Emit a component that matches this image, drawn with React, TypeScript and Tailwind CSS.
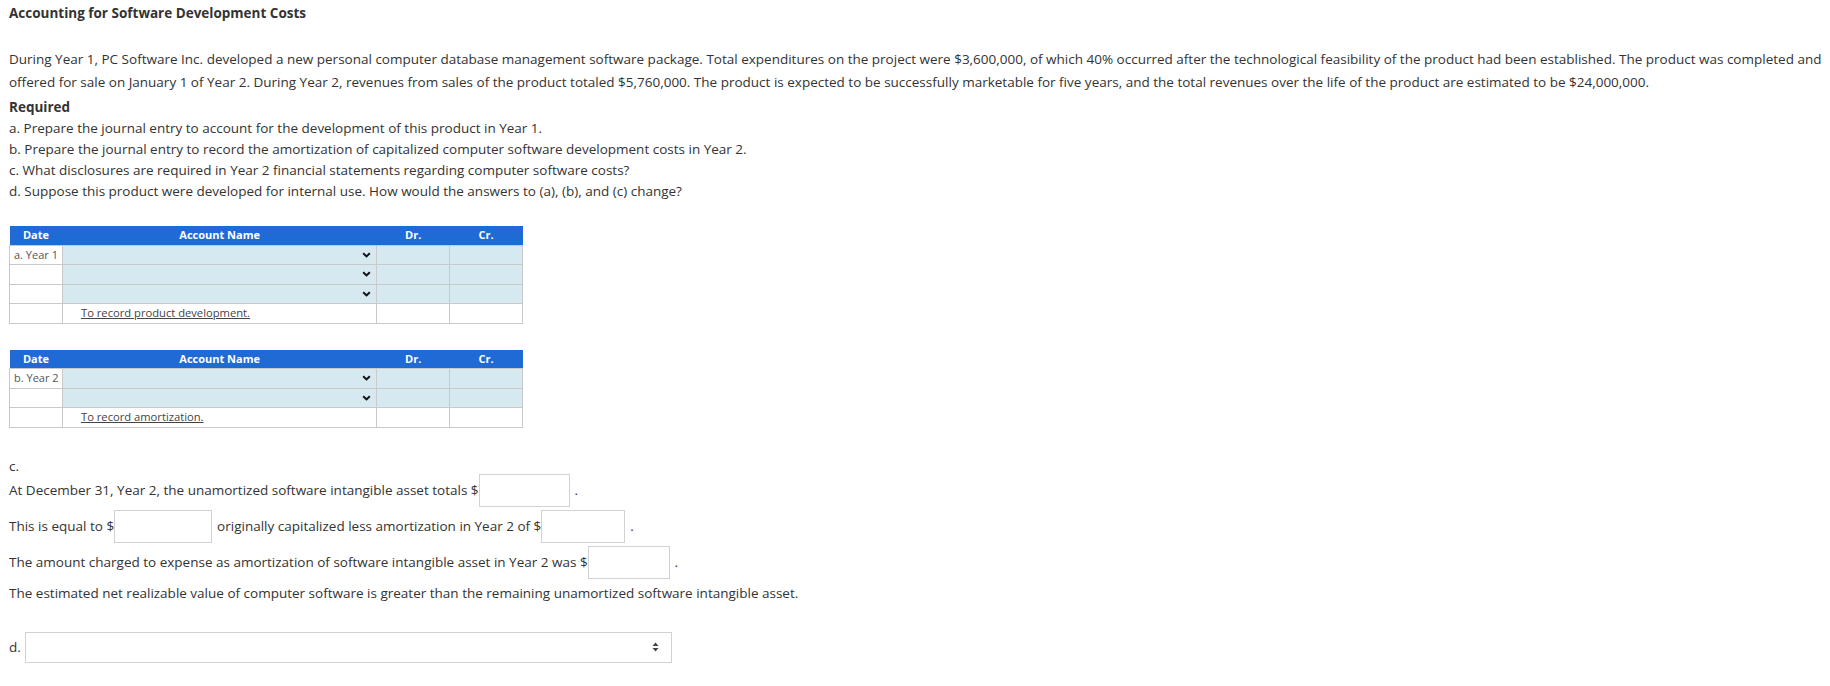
import React from "react";

const font = { fontFamily: '"Open Sans", Arial, sans-serif' };

function Chevron() {
  return (
    <svg width="9" height="6" viewBox="0 0 9 6" className="text-[#111]">
      <path d="M1.2 1.2 L4.5 4.4 L7.8 1.2" fill="none" stroke="currentColor" strokeWidth="2" />
    </svg>
  );
}

type Row = { date?: string; select: boolean; note?: string };

function Journal({ rows }: { rows: Row[] }) {
  return (
    <table className="border-collapse w-[514px] text-[11px] text-[#333]">
      <thead>
        <tr className="bg-[#1f6ad4] text-white font-bold h-[19px]">
          <th className="w-[53px] text-center font-bold">Date</th>
          <th className="w-[315px] text-center font-bold">Account Name</th>
          <th className="w-[73px] text-center font-bold">Dr.</th>
          <th className="w-[73px] text-center font-bold">Cr.</th>
        </tr>
      </thead>
      <tbody>
        {rows.map((r, i) => (
          <tr key={i} className="h-[19.5px]">
            <td className="border border-[#c9c9c9] pl-[4px] whitespace-nowrap text-[#555]">{r.date}</td>
            {r.select ? (
              <td className="border border-[#c9c9c9] bg-[#d6e9f0] pr-[5px]">
                <div className="flex justify-end items-center">
                  <Chevron />
                </div>
              </td>
            ) : (
              <td className="border border-[#c9c9c9] pl-[18px]">
                <span className="underline text-[#444] text-[11.2px]">{r.note}</span>
              </td>
            )}
            <td className={`border border-[#c9c9c9] ${r.select ? "bg-[#d6e9f0]" : ""}`}></td>
            <td className={`border border-[#c9c9c9] ${r.select ? "bg-[#d6e9f0]" : ""}`}></td>
          </tr>
        ))}
      </tbody>
    </table>
  );
}

function Box({ w }: { w: string }) {
  return <input type="text" className={`${w} h-[33px] border border-[#d2d2d2] bg-white outline-none`} />;
}

export default function App() {
  return (
    <div className="min-h-screen bg-white text-[#333] text-[13.5px] pl-[9px] pr-0 pt-[3px]" style={font}>
      <h1 className="font-bold text-[13.5px] leading-[20px] text-[#333]">Accounting for Software Development Costs</h1>

      <p className="mt-[25px] leading-[23px]">
        During Year 1, PC Software Inc. developed a new personal computer database management software package. Total expenditures on the project were $3,600,000, of which 40% occurred after the technological feasibility of the product had been established. The product was completed and offered for sale on January 1 of Year 2. During Year 2, revenues from sales of the product totaled $5,760,000. The product is expected to be successfully marketable for five years, and the total revenues over the life of the product are estimated to be $24,000,000.
      </p>

      <div className="mt-[3px] leading-[21px]">
        <div className="font-bold">Required</div>
        <div>a. Prepare the journal entry to account for the development of this product in Year 1.</div>
        <div>b. Prepare the journal entry to record the amortization of capitalized computer software development costs in Year 2.</div>
        <div>c. What disclosures are required in Year 2 financial statements regarding computer software costs?</div>
        <div>d. Suppose this product were developed for internal use. How would the answers to (a), (b), and (c) change?</div>
      </div>

      <div className="mt-[24px]">
        <Journal
          rows={[
            { date: "a. Year 1", select: true },
            { select: true },
            { select: true },
            { select: false, note: "To record product development." },
          ]}
        />
      </div>

      <div className="mt-[26px]">
        <Journal
          rows={[
            { date: "b. Year 2", select: true },
            { select: true },
            { select: false, note: "To record amortization." },
          ]}
        />
      </div>

      <div className="mt-[28px] leading-[20px]">c.</div>

      <div className="flex flex-col gap-[3px] mt-[-2px]">
        <div className="flex items-center h-[33px]">
          <span>At December 31, Year 2, the unamortized software intangible asset totals $</span>
          <Box w="w-[91px]" />
          <span className="ml-[5px]">.</span>
        </div>
        <div className="flex items-center h-[33px]">
          <span>This is equal to $</span>
          <Box w="w-[98px]" />
          <span className="ml-[5px]">originally capitalized less amortization in Year 2 of $</span>
          <Box w="w-[84px]" />
          <span className="ml-[5px]">.</span>
        </div>
        <div className="flex items-center h-[33px]">
          <span>The amount charged to expense as amortization of software intangible asset in Year 2 was $</span>
          <Box w="w-[82px]" />
          <span className="ml-[5px]">.</span>
        </div>
      </div>

      <div className="mt-[4px] leading-[20px]">
        The estimated net realizable value of computer software is greater than the remaining unamortized software intangible asset.
      </div>

      <div className="mt-[29px] flex items-center">
        <span className="w-[16px]">d.</span>
        <div className="relative w-[647px] h-[31px]">
          <select className="appearance-none w-full h-full border border-[#d2d2d2] bg-white outline-none text-[13px]">
            <option value=""></option>
          </select>
          <svg
            width="7"
            height="10"
            viewBox="0 0 7 10"
            className="absolute right-[13px] top-[10px] pointer-events-none text-[#444]"
          >
            <path d="M3.5 0.5 L6.5 4 L0.5 4 Z" fill="currentColor" />
            <path d="M3.5 9.5 L6.5 6 L0.5 6 Z" fill="currentColor" />
          </svg>
        </div>
      </div>
    </div>
  );
}
